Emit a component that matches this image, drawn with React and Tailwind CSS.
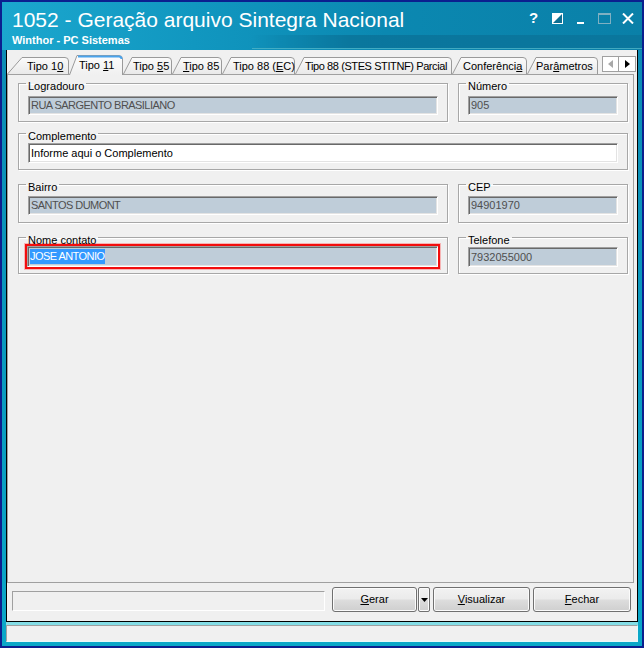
const tabs = [
  { pre: 'Tipo 1', key: '0', post: '', w: 62, s: 15, cls: 'w-[62px] pl-[20px]' },
  { pre: 'Tipo ', key: '1', post: '1', w: 54, s: 8, cls: 'w-[54px] pl-[10px]', active: true },
  { pre: 'Tipo ', key: '5', post: '5', w: 49, s: 9, cls: 'w-[49px] pl-[10px]' },
  { pre: '', key: 'T', post: 'ipo 85', w: 50, s: 9, cls: 'w-[50px] pl-[11px]' },
  { pre: 'Tipo 88 (', key: 'E', post: 'C)', w: 73, s: 9, cls: 'w-[73px] pl-[11px]' },
  { pre: 'Tipo 88 (STES STITNF) Parcial', key: '', post: '', w: 157, s: 9, cls: 'w-[157px] pl-[10px] tracking-[-0.4px]' },
  { pre: 'Conferênci', key: 'a', post: '', w: 75, s: 9, cls: 'w-[75px] pl-[11px]' },
  { pre: 'Par', key: 'â', post: 'metros', w: 71, s: 9, cls: 'w-[71px] pl-[9px]' },
];

function Tab({ tab, idx }) {
  const h = tab.active ? 20 : 17;
  const d = `M0.5 ${h} L${tab.s} 0.5 H${tab.w - 4} Q${tab.w - 0.5} 0.5 ${tab.w - 0.5} 4 V${h}`;
  return (
    <div
      className={`relative shrink-0 ${tab.cls} ${
        tab.active ? 'h-[20px] -mb-px z-10 pt-[4px]' : 'h-[17px] pt-[3px]'
      }`}
    >
      <svg className="absolute inset-0" width={tab.w} height={h}>
        <defs>
          <linearGradient id={`tabfill${idx}`} x1="0" y1="0" x2="0" y2="1">
            <stop offset="0" stopColor={tab.active ? '#fdfdfd' : '#fbfbfb'} />
            <stop offset="1" stopColor={tab.active ? '#f0f0f0' : '#e9e9e9'} />
          </linearGradient>
        </defs>
        <path d={d + ' Z'} fill={`url(#tabfill${idx})`} stroke="none" />
        <path d={d} fill="none" stroke="#9a9a9a" />
        {tab.active && (
          <path d={`M${tab.s + 1} 1.5 H${tab.w - 4} Q${tab.w - 1.5} 1.5 ${tab.w - 1.5} 4`} fill="none" stroke="#4aa3ec" strokeWidth="2" />
        )}
      </svg>
      <span className="relative block text-[11px] leading-[13px] text-black whitespace-nowrap">
        {tab.pre}
        {tab.key && <u>{tab.key}</u>}
        {tab.post}
      </span>
    </div>
  );
}

function Field({ value, white, caps, cls = 'h-[19px] leading-[17px]' }) {
  return (
    <div
      className={`${cls} ${caps ? 'tracking-[-0.55px]' : ''} border border-t-[#a0a0a0] border-l-[#a0a0a0] border-b-white border-r-white shadow-[inset_1px_1px_0_#696969,inset_-1px_-1px_0_#e3e3e3] pl-[2px] text-[11px] whitespace-nowrap overflow-hidden ${
        white ? 'bg-white text-black' : 'bg-[#bfcdd9] text-[#4f4f4f]'
      }`}
    >
      {value}
    </div>
  );
}

function Group({ label, cls, children }) {
  return (
    <fieldset
      className={`border border-[#a7a7a7] shadow-[inset_1px_1px_0_#ffffff,1px_1px_0_#ffffff] px-[9px] ${cls}`}
    >
      <legend className="-ml-[2px] px-[2px] text-[11px] leading-[13px] text-black">
        <span className="relative top-[3px]">{label}</span>
      </legend>
      {children}
    </fieldset>
  );
}

function Button({ children, cls }) {
  return (
    <div
      className={`h-[25px] ${cls} rounded-[3px] border border-[#707070] shadow-[inset_0_0_0_1px_#fbfbfb] bg-[linear-gradient(#f2f2f2_0%,#ebebeb_48%,#dddddd_52%,#cfcfcf_100%)] flex items-center justify-center text-[11px] text-black`}
    >
      {children}
    </div>
  );
}

function TitleButtons() {
  return (
    <div className="flex items-start pt-[9px] pr-[8px]">
      <span className="w-[10px] text-[15px] leading-[14px] font-bold text-white">?</span>
      <svg className="ml-[13px] mt-[2px]" width="11" height="11" viewBox="0 0 11 11">
        <rect x="0.5" y="0.5" width="10" height="10" fill="#0d6f92" stroke="#ffffff" />
        <path d="M0 0 H11 L0 11 Z" fill="#ffffff" />
      </svg>
      <div className="ml-[14px] mt-[11px] w-[7px] h-[2px] bg-white" />
      <svg className="ml-[14px] mt-[2px]" width="13" height="11" viewBox="0 0 13 11">
        <rect x="0.5" y="1" width="12" height="9.5" fill="none" stroke="#7fb0c2" />
        <rect x="0" y="0" width="13" height="2" fill="#7fb0c2" />
      </svg>
      <svg className="ml-[11px] mt-[2px]" width="12" height="11" viewBox="0 0 12 11">
        <path d="M1 0.5 L11 10.5 M11 0.5 L1 10.5" stroke="#ffffff" strokeWidth="2" />
      </svg>
    </div>
  );
}

export default function App() {
  return (
    <div className="w-[644px] h-[648px] bg-[#0b1f8f] p-[2px] font-['Liberation_Sans',Arial,sans-serif]">
      <div className="h-full flex flex-col bg-[linear-gradient(#0c8ab3,#0aa7c8)]">
        {/* title bar */}
        <div className="relative h-[48px] shrink-0 flex justify-between bg-[linear-gradient(90deg,#1ba7ce_0%,#1197c0_30%,#0b88b1_60%,#0a80a8_100%)]">
          <div className="absolute left-[250px] right-0 top-[33px] h-[14px] bg-[linear-gradient(90deg,transparent,#0a6f95_25%,#0a7399)] opacity-70 border-b border-[#57b9c9]" />
          <div className="relative pl-[10px] pt-[6px] text-white">
            <div className="text-[21px] leading-[24px]">1052 - Geração arquivo Sintegra Nacional</div>
            <div className="mt-[2px] text-[11px] leading-[13px] font-bold">Winthor - PC Sistemas</div>
          </div>
          <div className="relative">
            <TitleButtons />
          </div>
        </div>

        {/* client area */}
        <div className="mx-[4px] h-[572px] shrink-0 flex flex-col bg-[#f0f0f0] border-x border-b border-black">
          <div className="h-[24px] flex items-end pr-[1px]">
            {tabs.map((t, i) => (
              <Tab key={i} tab={t} idx={i} />
            ))}
            <div className="ml-auto self-start mt-[6px] flex">
              <div className="w-[17px] h-[16px] border border-[#a0a0a0] bg-white flex items-center justify-center">
                <svg width="5" height="8" viewBox="0 0 5 8"><path d="M5 0 V8 L0 4 Z" fill="#a8a8a8" /></svg>
              </div>
              <div className="w-[17px] h-[16px] border border-l-0 border-[#a0a0a0] bg-white flex items-center justify-center">
                <svg width="5" height="8" viewBox="0 0 5 8"><path d="M0 0 V8 L5 4 Z" fill="#000000" /></svg>
              </div>
            </div>
          </div>

          <div className="flex-1 mr-[3px] border border-[#a0a0a0] bg-[#f0f0f0] pl-[10px] pr-[5px] pt-[2px]">
            <div className="flex gap-[10px]">
              <Group label="Logradouro" cls="w-[430px]">
                <div className="mt-[6px] mb-[6px]">
                  <Field value="RUA SARGENTO BRASILIANO" caps />
                </div>
              </Group>
              <Group label="Número" cls="w-[170px]">
                <div className="mt-[6px] mb-[6px]">
                  <Field value="905" />
                </div>
              </Group>
            </div>

            <Group label="Complemento" cls="w-[610px] mt-[5px]">
              <div className="mt-[3px] mb-[6px]">
                <Field value="Informe aqui o Complemento" white cls="h-[20px] leading-[18px]" />
              </div>
            </Group>

            <div className="flex gap-[10px] mt-[8px]">
              <Group label="Bairro" cls="w-[430px]">
                <div className="mt-[5px] mb-[7px]">
                  <Field value="SANTOS DUMONT" caps />
                </div>
              </Group>
              <Group label="CEP" cls="w-[170px]">
                <div className="mt-[5px] mb-[7px]">
                  <Field value="94901970" />
                </div>
              </Group>
            </div>

            <div className="flex gap-[10px] mt-[8px]">
              <Group label="Nome contato" cls="w-[430px]">
                <div className="-ml-[3px] -mr-[2px] mb-[4px] border-2 border-[#f20d0d] shadow-[0_0_0_1px_#f7b4b4]">
                  <Field
                    value={<span className="inline-block bg-[#3399ff] text-white leading-[15px]">JOSE ANTONIO</span>}
                    caps
                    cls="h-[21px] leading-[19px]"
                  />
                </div>
              </Group>
              <Group label="Telefone" cls="w-[170px]">
                <div className="mt-[3px] mb-[6px]">
                  <Field value="7932055000" cls="h-[20px] leading-[18px]" />
                </div>
              </Group>
            </div>
          </div>

          {/* footer */}
          <div className="h-[38px] shrink-0 flex items-start pt-[4px] pl-[5px] pr-[6px]">
            <div className="mt-[4px] w-[313px] h-[20px] border border-t-[#a0a0a0] border-l-[#a0a0a0] border-b-white border-r-white" />
            <Button cls="ml-[7px] w-[85px]">
              <span><u>G</u>erar</span>
            </Button>
            <div className="ml-[1px] w-[12px] h-[25px] rounded-[2px] border border-[#707070] shadow-[inset_0_0_0_1px_#fbfbfb] bg-[linear-gradient(#f2f2f2_0%,#ebebeb_48%,#dddddd_52%,#cfcfcf_100%)] flex items-center justify-center">
              <svg width="7" height="4" viewBox="0 0 7 4"><path d="M0 0 H7 L3.5 4 Z" fill="#000000" /></svg>
            </div>
            <Button cls="ml-[3px] w-[97px]">
              <span><u>V</u>isualizar</span>
            </Button>
            <Button cls="ml-[3px] w-[98px]">
              <span><u>F</u>echar</span>
            </Button>
          </div>
        </div>

        <div className="mx-[4px] h-[3px] shrink-0 bg-[#84dde6]" />
        {/* status bar */}
        <div className="mx-[4px] h-[17px] shrink-0 bg-[#f0f0f0] border border-t-[#a0a0a0] border-l-[#a0a0a0] border-b-[#e8f8fa] border-r-[#e8f8fa]" />
      </div>
    </div>
  );
}
